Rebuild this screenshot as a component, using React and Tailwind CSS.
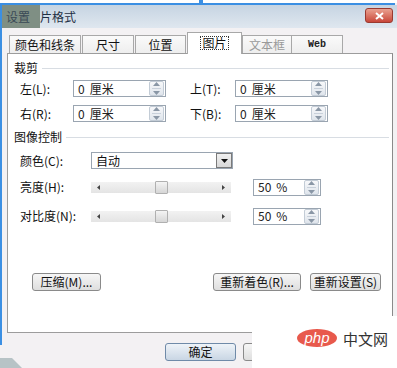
import React from "react";

const F = "font-['Noto_Sans_CJK_SC','Noto_Sans_CJK_JP',sans-serif]";

function Spin() {
  return (
    <div className="w-[15px] h-[15px] border border-[#c3ccd6] rounded-[2px] bg-gradient-to-b from-[#f7f8fa] to-[#dfe5ec] flex flex-col items-center justify-center gap-[2px]">
      <svg width="7" height="4" viewBox="0 0 7 4"><path d="M0 4 L3.5 0 L7 4Z" fill="#8a97a6" /></svg>
      <div className="w-[9px] h-px bg-[#c8d0da]" />
      <svg width="7" height="4" viewBox="0 0 7 4"><path d="M0 0 L3.5 4 L7 0Z" fill="#8a97a6" /></svg>
    </div>
  );
}

function Field({ num, unit, w = 93 }) {
  return (
    <div className="h-[17px] border border-[#9aa5b1] bg-white flex items-center pl-[4px] pr-px" style={{ width: w }}>
      <span className="flex-1 flex gap-[5px] text-[12px] leading-none text-[#222]">
        <span>{num}</span>
        <span>{unit}</span>
      </span>
      <Spin />
    </div>
  );
}

function Slider() {
  return (
    <div className="w-[140px] h-[11px] bg-gradient-to-b from-[#f2f2f2] to-[#e4e4e4] flex items-center relative">
      <svg className="absolute left-[6px]" width="3" height="5" viewBox="0 0 3 5"><path d="M3 0 L0 2.5 L3 5Z" fill="#444" /></svg>
      <svg className="absolute right-[6px]" width="3" height="5" viewBox="0 0 3 5"><path d="M0 0 L3 2.5 L0 5Z" fill="#444" /></svg>
      <div className="absolute left-[64px] top-[-1px] w-[13px] h-[13px] border border-[#b0b0b0] rounded-[1px] bg-gradient-to-b from-[#f4f4f4] to-[#d6d6d6]" />
    </div>
  );
}

function Btn({ children, w }) {
  return (
    <div className="h-[18px] border border-[#8a8a8a] rounded-[3px] bg-gradient-to-b from-[#f6f6f6] to-[#dedede] flex items-center justify-center text-[12px] leading-none text-[#111]" style={{ width: w }}>
      {children}
    </div>
  );
}

function Section({ title }) {
  return (
    <div className="flex items-center gap-[4px] pl-[6px] pr-[3px] h-[14px]">
      <span className="text-[12px] leading-none text-[#111]">{title}</span>
      <div className="flex-1 h-px bg-[#d8dde3]" />
    </div>
  );
}

export default function App() {
  return (
    <div className={`w-[397px] h-[368px] relative overflow-hidden bg-[#f3f1f3] ${F}`}>
      {/* top selection line */}
      <div className="h-[3px] bg-white" />
      <div className="h-[2px] bg-[#3b8fe3] mr-[2px]" />
      <div className="absolute left-[199px] top-0 w-[4px] h-[5px] bg-[#3b8fe3]" />
      {/* title bar */}
      <div className="h-[23px] bg-gradient-to-b from-[#c6d4e2] to-[#dfe7ef] flex items-center relative">
        <div className="w-[40px] h-full bg-[#7f8f84] flex items-center pl-[6px] text-[12px] text-[#3a4a56]">设置</div>
        <span className="text-[12px] text-[#1f2f44] leading-none">片格式</span>
        <div className="absolute right-[4px] top-[3px] w-[28px] h-[15px] rounded-[3px] bg-gradient-to-b from-[#e9a090] to-[#c8463a] border border-[#9a3a30] flex items-center justify-center">
          <svg width="9" height="8" viewBox="0 0 9 8"><path d="M1 1 L8 7 M8 1 L1 7" stroke="#fff" strokeWidth="2" /></svg>
        </div>
      </div>
      {/* left blue edge */}
      <div className="absolute left-0 top-[5px] w-[2px] h-[340px] bg-[#3b8fe3]" />
      {/* tabs */}
      <div className="h-[25px] flex items-end pl-[9px] relative z-10">
        {[
          ["颜色和线条", 72],
          ["尺寸", 52],
          ["位置", 51],
        ].map(([t, w]) => (
          <div key={t} className="h-[18px] border border-b-0 border-[#a8a8a8] bg-gradient-to-b from-[#fafafa] to-[#eeeeee] flex items-center justify-center text-[12px] leading-none text-[#111] mr-px" style={{ width: w }}>
            {t}
          </div>
        ))}
        <div className="w-[55px] h-[22px] border border-b-0 border-[#a8a8a8] bg-white flex items-start justify-center pt-[3px] -mb-px">
          <span className="text-[12px] leading-none text-[#111] border border-dotted border-[#333] px-px">图片</span>
        </div>
        <div className="w-[50px] h-[18px] border border-b-0 border-[#a8a8a8] bg-gradient-to-b from-[#fafafa] to-[#eeeeee] flex items-center justify-center text-[12px] leading-none text-[#9a9a9a]">
          文本框
        </div>
        <div className="w-[51px] h-[18px] border border-b-0 border-l-0 border-[#a8a8a8] bg-gradient-to-b from-[#fafafa] to-[#eeeeee] flex items-center justify-center text-[10px] leading-none font-bold text-[#222] font-['Liberation_Mono',monospace]">
          Web
        </div>
      </div>
      {/* panel */}
      <div className="ml-[7px] w-[386px] h-[280px] bg-white border border-[#9c9c9c] border-r-[#8a8a8a] flex flex-col pt-[7px]">
        <Section title="裁剪" />
        <div className="flex items-center mt-[5px] pl-[12px] h-[17px]">
          <span className="w-[53px] text-[12px] leading-none text-[#111]">左(L):</span>
          <Field num="0" unit="厘米" />
          <span className="ml-[24px] w-[45px] text-[12px] leading-none text-[#111]">上(T):</span>
          <Field num="0" unit="厘米" />
        </div>
        <div className="flex items-center mt-[8px] pl-[12px] h-[17px]">
          <span className="w-[53px] text-[12px] leading-none text-[#111]">右(R):</span>
          <Field num="0" unit="厘米" />
          <span className="ml-[24px] w-[45px] text-[12px] leading-none text-[#111]">下(B):</span>
          <Field num="0" unit="厘米" />
        </div>
        <div className="mt-[8px]"><Section title="图像控制" /></div>
        <div className="flex items-center mt-[8px] pl-[12px] h-[17px]">
          <span className="w-[71px] text-[12px] leading-none text-[#111]">颜色(C):</span>
          <div className="w-[142px] h-[17px] border border-[#9aa5b1] bg-white flex items-center pl-[4px]">
            <span className="flex-1 text-[12px] leading-none text-[#111]">自动</span>
            <div className="w-[16px] h-[15px] border border-[#7a7a7a] bg-gradient-to-b from-[#f0f0f0] to-[#d8d8d8] flex items-center justify-center">
              <svg width="7" height="4" viewBox="0 0 7 4"><path d="M0 0 L3.5 4 L7 0Z" fill="#111" /></svg>
            </div>
          </div>
        </div>
        <div className="flex items-center mt-[9px] pl-[12px] h-[18px]">
          <span className="w-[71px] text-[12px] leading-none text-[#111]">亮度(H):</span>
          <Slider />
          <div className="ml-[22px]"><Field num="50" unit="%" w={68} /></div>
        </div>
        <div className="flex items-center mt-[11px] pl-[12px] h-[18px]">
          <span className="w-[71px] text-[12px] leading-none text-[#111]">对比度(N):</span>
          <Slider />
          <div className="ml-[22px]"><Field num="50" unit="%" w={68} /></div>
        </div>
        <div className="flex items-center mt-[48px] pl-[24px] h-[18px]">
          <Btn w={69}>压缩(M)...</Btn>
          <div className="flex-1" />
          <Btn w={88}>重新着色(R)...</Btn>
          <div className="w-[9px]" />
          <Btn w={71}>重新设置(S)</Btn>
          <div className="w-[11px]" />
        </div>
      </div>
      {/* bottom buttons */}
      <div className="flex items-center mt-[10px] pl-[165px] h-[18px]">
        <div className="w-[71px] h-[18px] border border-[#6f8aa8] rounded-[3px] bg-gradient-to-b from-[#eef3f8] to-[#c9d6e4] flex items-center justify-center text-[12px] leading-none text-[#111]">确定</div>
        <div className="ml-[7px] w-[40px] h-[18px] border border-[#8a8a8a] rounded-[3px] bg-gradient-to-b from-[#f6f6f6] to-[#dedede]" />
      </div>
      {/* bottom-left corner */}
      <svg className="absolute left-0 bottom-0" width="22" height="10" viewBox="0 0 22 10"><path d="M0 0 L12 0 L22 10 L0 10Z" fill="#b7c3c6" /></svg>
      {/* watermark */}
      <div className="absolute left-[252px] top-[316px] w-[145px] h-[52px] bg-white flex items-center pl-[45px] gap-[6px] pb-[8px]">
        <div className="w-[40px] h-[18px] rounded-[50%] bg-[#e8594c] flex items-center justify-center">
          <span className="text-white italic text-[15px] leading-none font-['Liberation_Sans',sans-serif] -mt-[2px]">php</span>
        </div>
        <span className="text-[15px] leading-none text-[#333]">中文网</span>
      </div>
    </div>
  );
}
